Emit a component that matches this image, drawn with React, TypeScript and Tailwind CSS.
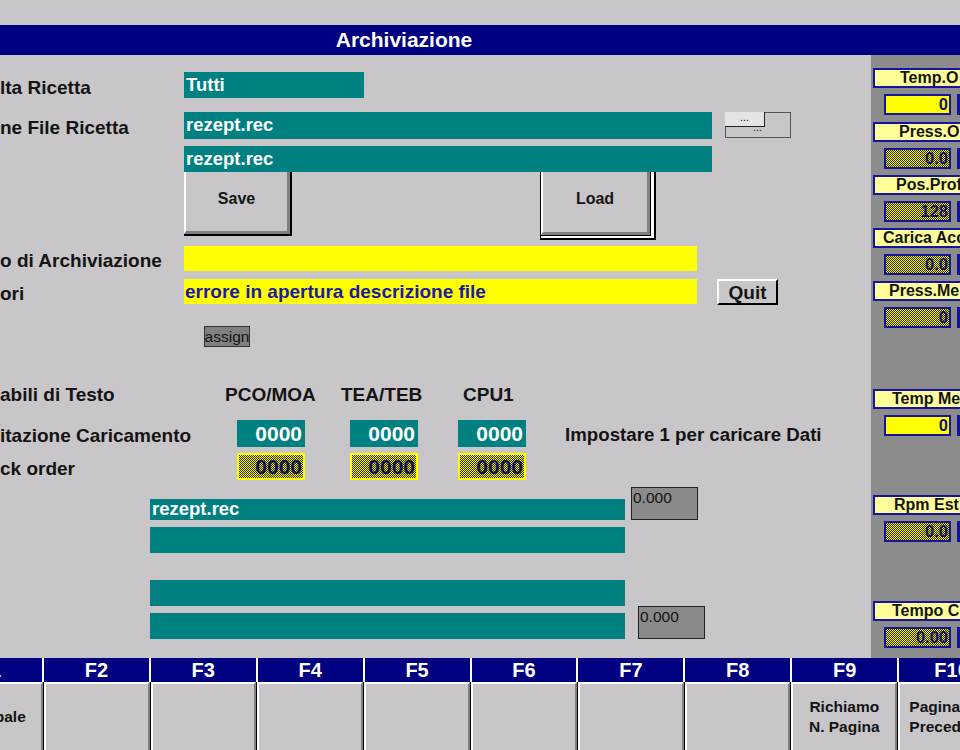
import React from "react";

const lbl = "text-[19px] font-bold text-[#141414] leading-none whitespace-nowrap";
const lblS = "text-[19px] font-bold text-[#141414] leading-none whitespace-nowrap pt-[4px]";
const teal = "bg-[#008080] text-white font-bold text-[18.5px] leading-none flex items-center pl-[2px] whitespace-nowrap";
const dither =
  "bg-[image:repeating-conic-gradient(#f4f400_0%_25%,#2c2c00_0%_50%)] bg-[length:2px_2px]";

function PanelLabel({ text, pl }: { text: string; pl: string }) {
  return (
    <div
      className={`ml-[2px] h-[20px] border-2 border-r-0 border-[#1414a0] bg-[#ffff99] overflow-hidden flex items-center whitespace-nowrap text-[16px] font-bold text-[#141414] leading-none ${pl}`}
    >
      {text}
    </div>
  );
}

function PanelValue({ v, dith }: { v: string; dith?: boolean }) {
  return (
    <div className="mt-[6px] h-[21px] flex">
      <div
        className={`ml-[13px] w-[67px] h-[21px] border-2 border-[#1414a0] flex items-center justify-end pr-[1px] text-[16.5px] font-bold text-[#141480] leading-none ${
          dith ? dither : "bg-[#ffff00]"
        }`}
      >
        {v}
      </div>
      <div className="ml-[6px] w-[20px] h-[21px] border-2 border-[#1414a0] bg-[#1414a0]" />
    </div>
  );
}

function NumBox({ dith }: { dith?: boolean }) {
  if (dith)
    return (
      <div
        className={`w-[68px] h-[27px] border-2 border-[#ffff00] flex items-center justify-end pr-[1px] text-[21px] font-bold text-[#101060] leading-none ${dither}`}
      >
        0000
      </div>
    );
  return (
    <div className="w-[68px] h-[27px] bg-[#008080] flex items-center justify-end pr-[3px] text-[21px] font-bold text-white leading-none">
      0000
    </div>
  );
}

function GrayBox({ ml }: { ml: string }) {
  return (
    <div
      className={`${ml} w-[67px] h-[33px] bg-[#8a8a8a] border border-[#222] pl-[1px] pt-[2px] text-[15.5px] leading-none text-[#141414]`}
    >
      0.000
    </div>
  );
}

const fkeys = ["F1", "F2", "F3", "F4", "F5", "F6", "F7", "F8", "F9", "F10"];

export default function App() {
  return (
    <div className="w-[960px] h-[750px] overflow-hidden bg-[#c8c6c9] font-['Liberation_Sans',Arial,sans-serif] flex flex-col">
      <div className="h-[25px] shrink-0" />
      <div className="h-[30px] shrink-0 bg-[#000080] flex">
        <div className="w-[808px] text-center text-white font-bold text-[21px] leading-[30px]">
          Archiviazione
        </div>
      </div>

      <div className="flex h-[603px] shrink-0">
        {/* main area */}
        <div className="w-[871px] shrink-0 flex flex-col">
          {/* Row 1 */}
          <div className="mt-[17px] h-[26px] flex items-center">
            <div className={`w-[184px] ${lblS}`}>lta Ricetta</div>
            <div className={`w-[180px] h-[26px] ${teal}`}>Tutti</div>
          </div>
          {/* Row 2 */}
          <div className="mt-[14px] h-[27px] flex items-center">
            <div className={`w-[184px] ${lblS}`}>ne File Ricetta</div>
            <div className={`w-[528px] h-[27px] ${teal}`}>rezept.rec</div>
            <div className="relative ml-[13px] w-[66px] h-[26px] border border-[#555] self-start">
              <div className="absolute left-[-1px] top-[-1px] w-[40px] h-[15px] bg-[#e4e4e4] border-r border-b border-[#222] text-[11px] leading-[10px] text-center text-[#222]">
                ...
              </div>
              <div className="absolute left-[27px] top-[9px] text-[11px] leading-[10px] text-[#222]">
                ...
              </div>
            </div>
          </div>
          {/* Row 3 */}
          <div className="mt-[7px] h-[26px] flex">
            <div className={`ml-[184px] w-[528px] h-[26px] ${teal}`}>rezept.rec</div>
          </div>
          {/* Row 4 buttons */}
          <div className="h-[68px] flex items-start">
            <div className="ml-[184px] w-[108px] h-[64px] border-r-2 border-b-2 border-black">
              <div className="h-full bg-[#c8c6c9] border-l-2 border-l-white border-r-[3px] border-b-[3px] border-r-[#808080] border-b-[#808080] flex items-center justify-center pb-[6px] text-[16px] font-bold text-[#141414]">
                Save
              </div>
            </div>
            <div className="ml-[248px] w-[116px] h-[68px] border-l border-r-2 border-b-2 border-black bg-white pr-[3px] pb-[2px]">
              <div className="h-full border-r border-b border-black">
                <div className="h-full bg-[#c8c6c9] border-l-2 border-l-white border-r-[3px] border-b-[3px] border-r-[#808080] border-b-[#808080] flex items-center justify-center pb-[6px] text-[16px] font-bold text-[#141414]">
                  Load
                </div>
              </div>
            </div>
          </div>
          {/* Row 5 */}
          <div className="mt-[6px] h-[25px] flex items-center">
            <div className={`w-[184px] ${lblS}`}>o di Archiviazione</div>
            <div className="w-[513px] h-[25px] bg-[#ffff00]" />
          </div>
          {/* Row 6 */}
          <div className="mt-[8px] h-[26px] flex items-start">
            <div className={`w-[184px] h-[25px] flex items-center ${lblS}`}>ori</div>
            <div className="w-[513px] h-[25px] bg-[#ffff00] flex items-center pl-[1px] text-[19px] font-bold text-[#1a1aa6] leading-none whitespace-nowrap">
              errore in apertura descrizione file
            </div>
            <div className="ml-[20px] w-[61px] h-[26px] bg-[#c8c6c9] border-l-2 border-t-2 border-l-white border-t-white border-r-2 border-b-2 border-r-black border-b-black flex items-center justify-center text-[19px] font-bold text-[#141414] leading-none">
              Quit
            </div>
          </div>
          {/* Row 7 assign */}
          <div className="mt-[21px] flex">
            <div className="ml-[204px] w-[46px] h-[21px] bg-[#808080] border border-[#333] flex items-center justify-center text-[15.5px] leading-none text-[#141414] overflow-hidden whitespace-nowrap">
              assign
            </div>
          </div>
          {/* Row 8 headers */}
          <div className="mt-[34px] h-[26px] flex items-center">
            <div className={`w-[225px] ${lbl}`}>abili di Testo</div>
            <div className={`w-[116px] ${lbl}`}>PCO/MOA</div>
            <div className={`w-[122px] ${lbl}`}>TEA/TEB</div>
            <div className={lbl}>CPU1</div>
          </div>
          {/* Row 9 */}
          <div className="mt-[13px] h-[27px] flex items-center">
            <div className={`w-[237px] ${lblS}`}>itazione Caricamento</div>
            <NumBox />
            <div className="ml-[45px]">
              <NumBox />
            </div>
            <div className="ml-[40px]">
              <NumBox />
            </div>
            <div className="ml-[39px] text-[18.7px] font-bold text-[#141414] leading-none whitespace-nowrap pt-[4px]">
              Impostare 1 per caricare Dati
            </div>
          </div>
          {/* Row 10 */}
          <div className="mt-[6px] h-[27px] flex items-center">
            <div className={`w-[237px] ${lblS}`}>ck order</div>
            <NumBox dith />
            <div className="ml-[45px]">
              <NumBox dith />
            </div>
            <div className="ml-[40px]">
              <NumBox dith />
            </div>
          </div>
          {/* Row 11 */}
          <div className="mt-[7px] h-[33px] flex items-end">
            <div className={`ml-[150px] w-[475px] h-[21px] ${teal}`}>rezept.rec</div>
            <GrayBox ml="ml-[6px]" />
          </div>
          {/* Row 12 */}
          <div className="mt-[7px] flex">
            <div className="ml-[150px] w-[475px] h-[26px] bg-[#008080]" />
          </div>
          {/* Row 13/14 */}
          <div className="mt-[27px] flex items-end">
            <div className="ml-[150px] w-[475px] flex flex-col">
              <div className="h-[26px] bg-[#008080]" />
              <div className="mt-[7px] h-[26px] bg-[#008080]" />
            </div>
            <GrayBox ml="ml-[13px]" />
          </div>
        </div>

        {/* right panel */}
        <div className="flex-1 bg-[#8c8c8c] flex flex-col">
          <div className="mt-[13px]">
            <PanelLabel text="Temp.O" pl="pl-[25px]" />
          </div>
          <PanelValue v="0" />
          <div className="mt-[7px]">
            <PanelLabel text="Press.O" pl="pl-[24px]" />
          </div>
          <PanelValue v="0.0" dith />
          <div className="mt-[6px]">
            <PanelLabel text="Pos.Prof" pl="pl-[21px]" />
          </div>
          <PanelValue v="128" dith />
          <div className="mt-[6px]">
            <PanelLabel text="Carica Acc" pl="pl-[8px]" />
          </div>
          <PanelValue v="0.0" dith />
          <div className="mt-[6px]">
            <PanelLabel text="Press.Me" pl="pl-[14px]" />
          </div>
          <PanelValue v="0" dith />
          <div className="mt-[61px]">
            <PanelLabel text="Temp Me" pl="pl-[17px]" />
          </div>
          <PanelValue v="0" />
          <div className="mt-[59px]">
            <PanelLabel text="Rpm Est" pl="pl-[19px]" />
          </div>
          <PanelValue v="0.0" dith />
          <div className="mt-[59px]">
            <PanelLabel text="Tempo C" pl="pl-[17px]" />
          </div>
          <PanelValue v="0.00" dith />
        </div>
      </div>

      {/* function keys */}
      <div className="ml-[-63px] w-[1067px] shrink-0 flex flex-col">
        <div className="h-[24px] grid grid-cols-10 gap-x-[2px] bg-white">
          {fkeys.map((k) => (
            <div
              key={k}
              className="bg-[#000080] text-white font-bold text-[20px] leading-[24px] text-center"
            >
              {k}
            </div>
          ))}
        </div>
        <div className="h-[70px] grid grid-cols-10 gap-x-[1px] bg-black">
          {fkeys.map((k, i) => (
            <div
              key={k}
              className="bg-[#c8c6c9] border-l-2 border-t-2 border-l-white border-t-white border-r-2 border-b-2 border-r-[#808080] border-b-[#808080] flex items-center text-[15.5px] font-bold text-[#141414] leading-[20px]"
            >
              {i === 0 && <div className="w-full text-right pr-[15px]">Globale</div>}
              {i === 8 && (
                <div className="w-full text-center">
                  Richiamo
                  <br />
                  N. Pagina
                </div>
              )}
              {i === 9 && (
                <div className="w-full flex justify-center">
                  <div className="text-left">
                    Pagina
                    <br />
                    Precedente
                  </div>
                </div>
              )}
            </div>
          ))}
        </div>
      </div>
    </div>
  );
}
